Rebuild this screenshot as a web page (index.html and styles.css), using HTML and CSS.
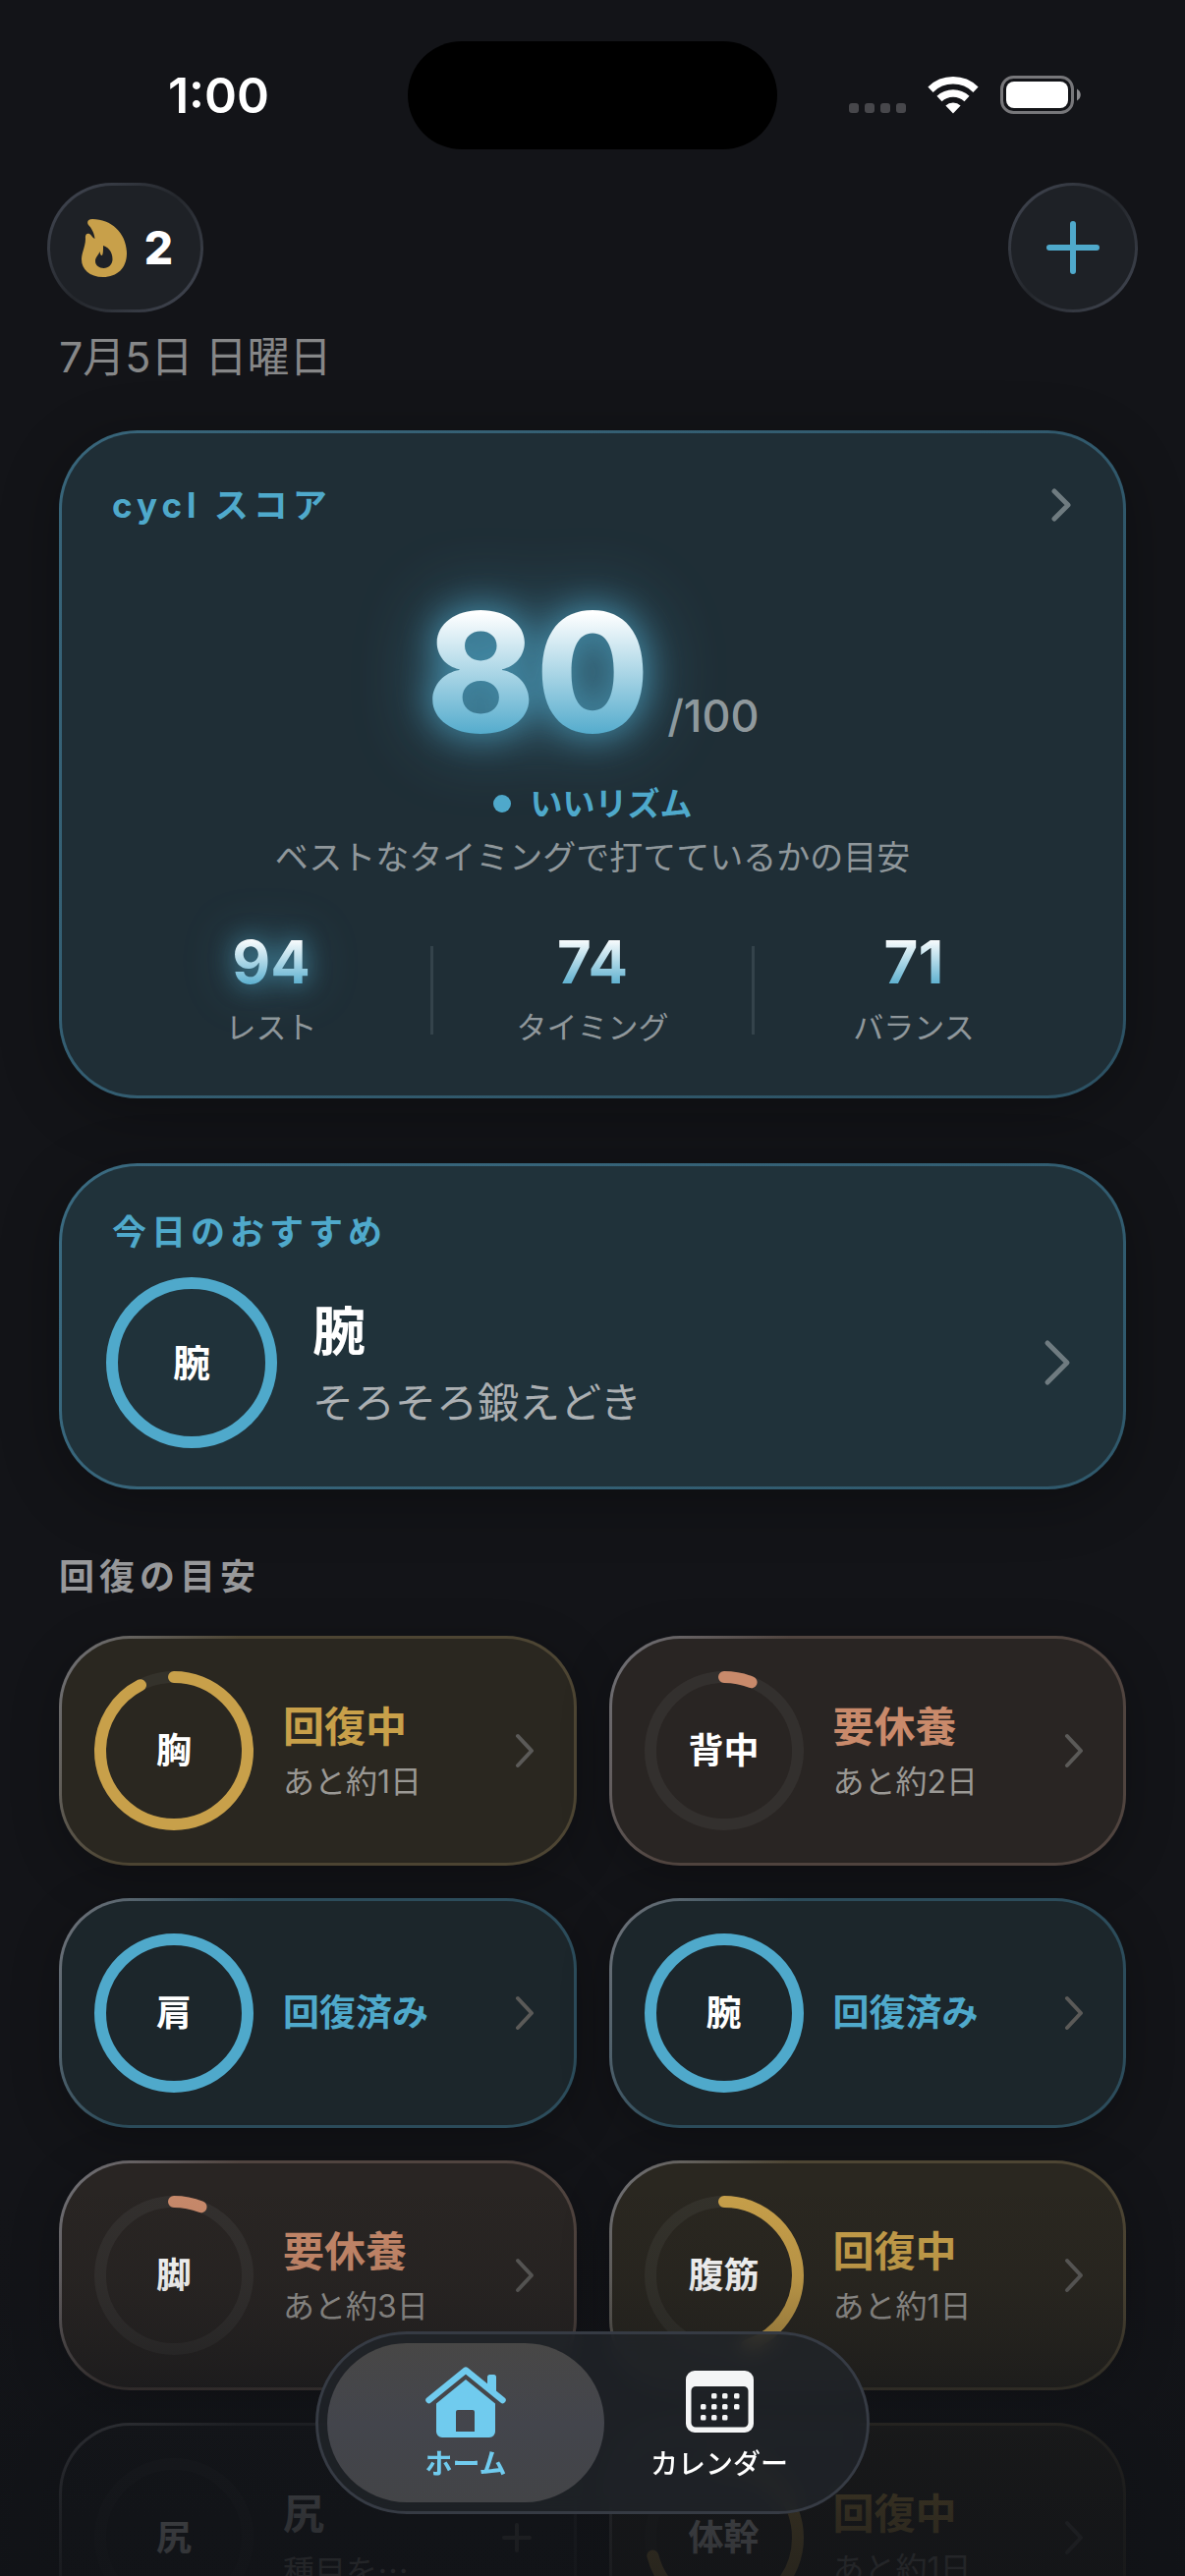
FILE: index.html
```html
<!DOCTYPE html>
<html lang="ja">
<head>
  <meta charset="UTF-8">
  <meta name="viewport" content="width=device-width, initial-scale=1.0">
  <title>cycl</title>
  <link rel="stylesheet" href="styles.css">
</head>
<body>
  <div class="screen">
    <div class="status-bar">
      <div class="status-time">1:00</div>
      <div class="island"></div>
      <div class="status-icons">
        <svg width="58" height="38" viewBox="0 0 58 38" fill="#47474b" aria-hidden="true">
          <rect x="0" y="27" width="10" height="10" rx="3"/>
          <rect x="16" y="27" width="10" height="10" rx="3"/>
          <rect x="32" y="27" width="10" height="10" rx="3"/>
          <rect x="48" y="27" width="10" height="10" rx="3"/>
        </svg>
        <svg width="52" height="38" viewBox="0 0 52 38" fill="none" stroke="#fff" stroke-width="7.5" aria-hidden="true">
          <path d="M3 13.2a33 33 0 0 1 46 0"/>
          <path d="M12 22.6a20.5 20.5 0 0 1 28 0"/>
          <path d="M26 37.5l-7.6-8a11 11 0 0 1 15.2 0z" fill="#fff" stroke="none"/>
        </svg>
        <svg width="82" height="40" viewBox="0 0 82 40" aria-hidden="true">
          <rect x="1.5" y="1.5" width="72" height="36" rx="12" fill="none" stroke="#77777a" stroke-width="3"/>
          <rect x="6" y="6" width="63" height="27" rx="8" fill="#fff"/>
          <path d="M78 13.5c5 2.500 5 9.500 0 12z" fill="#8a8a8d"/>
        </svg>
      </div>
    </div>

    <main class="content">
      <header class="toolbar">
        <button class="glass-button streak" type="button" aria-label="連続記録 2">
          <svg width="46" height="59" viewBox="0 0 46 59" aria-hidden="true">
            <path fill="#c8a04a" fill-rule="evenodd" d="M11 0C31 0 46 15 46 35 46 50 36 59 22 59 8 59 0 51 0 41 0 34 4 28 4 20 3.500 16 5 14 8 15 10 16 11 19 13.500 20 13 14 10 9 7 6 5 3 6.500 0 11 0zM22 27c0 5 0 8-1 10-2 0-2-2-2.500-4-1 4-4.500 5-4.500 10 0 4 4 7 8.500 7 5 0 9-4 9-9C31.500 34 28 29 22 27z"/>
          </svg>
          <span class="streak-count">2</span>
        </button>
        <button class="glass-button add" type="button" aria-label="追加">
          <svg width="54" height="54" viewBox="0 0 54 54" fill="none" stroke="#4fa9cb" stroke-width="6" stroke-linecap="round" aria-hidden="true">
            <path d="M27 3v48M3 27h48"/>
          </svg>
        </button>
      </header>

      <p class="date">7月5日 日曜日</p>

      <a class="card score-card" href="#score">
        <div class="card-head">
          <h2 class="card-label">cycl スコア</h2>
          <svg class="chevron" width="22" height="34" viewBox="0 0 22 34" aria-hidden="true"><path d="M3 3l14 14L3 31"/></svg>
        </div>
        <div class="score">
          <span class="score-value">80</span>
          <span class="score-max">/100</span>
        </div>
        <p class="rhythm"><span class="dot"></span>いいリズム</p>
        <p class="score-note">ベストなタイミングで打てているかの目安</p>
        <div class="stats">
          <div class="stat">
            <span class="stat-value glow">94</span>
            <span class="stat-label">レスト</span>
          </div>
          <div class="divider"></div>
          <div class="stat">
            <span class="stat-value">74</span>
            <span class="stat-label">タイミング</span>
          </div>
          <div class="divider"></div>
          <div class="stat">
            <span class="stat-value">71</span>
            <span class="stat-label">バランス</span>
          </div>
        </div>
      </a>

      <a class="card pick-card" href="#arms">
        <h2 class="card-label">今日のおすすめ</h2>
        <div class="pick-row">
          <div class="ring ring-large ready">
            <svg viewBox="0 0 162 162" aria-hidden="true"><circle class="bar" cx="81" cy="81" r="81"/></svg>
            <span class="ring-text">腕</span>
          </div>
          <div class="pick-text">
            <span class="pick-title">腕</span>
            <span class="pick-sub">そろそろ鍛えどき</span>
          </div>
          <svg class="chevron" width="30" height="48" viewBox="0 0 30 48" aria-hidden="true"><path d="M4 4l20 20L4 44"/></svg>
        </div>
      </a>

      <h2 class="section-title">回復の目安</h2>

      <div class="grid">
        <a class="muscle recovering" href="#chest">
          <div class="ring">
            <svg viewBox="0 0 150 150" aria-hidden="true">
              <circle class="track" cx="75" cy="75" r="75"/>
              <circle class="bar" cx="75" cy="75" r="75" pathLength="100" stroke-dasharray="92.5 100"/>
            </svg>
            <span class="ring-text">胸</span>
          </div>
          <div class="muscle-text">
            <span class="state">回復中</span>
            <span class="remain">あと約1日</span>
          </div>
          <svg class="chevron" width="20" height="34" viewBox="0 0 20 34" aria-hidden="true"><path d="M2 2l14 15L2 32"/></svg>
        </a>

        <a class="muscle rest" href="#back">
          <div class="ring">
            <svg viewBox="0 0 150 150" aria-hidden="true">
              <circle class="track" cx="75" cy="75" r="75"/>
              <circle class="bar" cx="75" cy="75" r="75" pathLength="100" stroke-dasharray="6 100"/>
            </svg>
            <span class="ring-text">背中</span>
          </div>
          <div class="muscle-text">
            <span class="state">要休養</span>
            <span class="remain">あと約2日</span>
          </div>
          <svg class="chevron" width="20" height="34" viewBox="0 0 20 34" aria-hidden="true"><path d="M2 2l14 15L2 32"/></svg>
        </a>

        <a class="muscle ready" href="#shoulders">
          <div class="ring">
            <svg viewBox="0 0 150 150" aria-hidden="true"><circle class="bar" cx="75" cy="75" r="75"/></svg>
            <span class="ring-text">肩</span>
          </div>
          <div class="muscle-text">
            <span class="state">回復済み</span>
          </div>
          <svg class="chevron" width="20" height="34" viewBox="0 0 20 34" aria-hidden="true"><path d="M2 2l14 15L2 32"/></svg>
        </a>

        <a class="muscle ready" href="#arms">
          <div class="ring">
            <svg viewBox="0 0 150 150" aria-hidden="true"><circle class="bar" cx="75" cy="75" r="75"/></svg>
            <span class="ring-text">腕</span>
          </div>
          <div class="muscle-text">
            <span class="state">回復済み</span>
          </div>
          <svg class="chevron" width="20" height="34" viewBox="0 0 20 34" aria-hidden="true"><path d="M2 2l14 15L2 32"/></svg>
        </a>

        <a class="muscle rest" href="#legs">
          <div class="ring">
            <svg viewBox="0 0 150 150" aria-hidden="true">
              <circle class="track" cx="75" cy="75" r="75"/>
              <circle class="bar" cx="75" cy="75" r="75" pathLength="100" stroke-dasharray="6 100"/>
            </svg>
            <span class="ring-text">脚</span>
          </div>
          <div class="muscle-text">
            <span class="state">要休養</span>
            <span class="remain">あと約3日</span>
          </div>
          <svg class="chevron" width="20" height="34" viewBox="0 0 20 34" aria-hidden="true"><path d="M2 2l14 15L2 32"/></svg>
        </a>

        <a class="muscle recovering" href="#abs">
          <div class="ring">
            <svg viewBox="0 0 150 150" aria-hidden="true">
              <circle class="track" cx="75" cy="75" r="75"/>
              <circle class="bar" cx="75" cy="75" r="75" pathLength="100" stroke-dasharray="45 100"/>
            </svg>
            <span class="ring-text">腹筋</span>
          </div>
          <div class="muscle-text">
            <span class="state">回復中</span>
            <span class="remain">あと約1日</span>
          </div>
          <svg class="chevron" width="20" height="34" viewBox="0 0 20 34" aria-hidden="true"><path d="M2 2l14 15L2 32"/></svg>
        </a>

        <a class="muscle empty" href="#glutes">
          <div class="ring">
            <svg viewBox="0 0 150 150" aria-hidden="true"><circle class="track" cx="75" cy="75" r="75"/></svg>
            <span class="ring-text">尻</span>
          </div>
          <div class="muscle-text">
            <span class="state">尻</span>
            <span class="remain">種目を…</span>
          </div>
          <svg class="chevron" width="34" height="30" viewBox="0 0 34 30" aria-hidden="true"><path d="M15 2v26M2 15h26"/></svg>
        </a>

        <a class="muscle recovering" href="#core">
          <div class="ring">
            <svg viewBox="0 0 150 150" aria-hidden="true">
              <circle class="track" cx="75" cy="75" r="75"/>
              <circle class="bar" cx="75" cy="75" r="75" pathLength="100" stroke-dasharray="71 100"/>
            </svg>
            <span class="ring-text">体幹</span>
          </div>
          <div class="muscle-text">
            <span class="state">回復中</span>
            <span class="remain">あと約1日</span>
          </div>
          <svg class="chevron" width="20" height="34" viewBox="0 0 20 34" aria-hidden="true"><path d="M2 2l14 15L2 32"/></svg>
        </a>
      </div>
    </main>

    <div class="fade"></div>

    <nav class="tab-bar">
      <a class="tab active" href="#home">
        <svg width="82" height="72" viewBox="0 0 82 72" aria-hidden="true">
          <path d="M3.500 34L41 3.500 78.500 34" fill="none" stroke="#70cbee" stroke-width="6.500" stroke-linecap="round" stroke-linejoin="round"/>
          <path d="M63 21V10.500a2.500 2.500 0 0 1 2.500-2.500h4a2.500 2.500 0 0 1 2.500 2.500V29z" fill="#70cbee"/>
          <path d="M41 13L71 37.500V66a6 6 0 0 1-6 6H17a6 6 0 0 1-6-6V37.500zM33 44a2 2 0 0 0-2 2v20h19V46a2 2 0 0 0-2-2z" fill="#70cbee" fill-rule="evenodd"/>
        </svg>
        <span>ホーム</span>
      </a>
      <a class="tab" href="#calendar">
        <svg width="68" height="72" viewBox="0 0 68 72" fill="#f4f5f6" aria-hidden="true">
          <path fill-rule="evenodd" d="M9 4h51a9 9 0 0 1 9 9v45a9 9 0 0 1-9 9H9a9 9 0 0 1-9-9V13a9 9 0 0 1 9-9zM10 20a4.500 4.500 0 0 0-4.500 4.500v32.500a4.500 4.500 0 0 0 4.500 4.500h49a4.500 4.500 0 0 0 4.500-4.500V24.500a4.500 4.500 0 0 0-4.500-4.500z"/>
          <rect x="26" y="27" width="5.500" height="5.500" rx="1.500"/>
          <rect x="37" y="27" width="5.500" height="5.500" rx="1.500"/>
          <rect x="49" y="27" width="5.500" height="5.500" rx="1.500"/>
          <rect x="15" y="38" width="5.500" height="5.500" rx="1.500"/>
          <rect x="26" y="38" width="5.500" height="5.500" rx="1.500"/>
          <rect x="37" y="38" width="5.500" height="5.500" rx="1.500"/>
          <rect x="49" y="38" width="5.500" height="5.500" rx="1.500"/>
          <rect x="15" y="49" width="5.500" height="5.500" rx="1.500"/>
          <rect x="26" y="49" width="5.500" height="5.500" rx="1.500"/>
          <rect x="37" y="49" width="5.500" height="5.500" rx="1.500"/>
        </svg>
        <span>カレンダー</span>
      </a>
    </nav>
  </div>
</body>
</html>
```
FILE: styles.css
```css
* {
  margin: 0;
  padding: 0;
  box-sizing: border-box;
}

body {
  font-family: Inter, 'Noto Sans CJK JP', sans-serif;
  background: #131418;
  color: white;
}

a {
  color: inherit;
  text-decoration: none;
}

svg {
  display: block;
  flex-shrink: 0;
  overflow: visible;
}

.screen {
  position: relative;
  height: 100vh;
  display: flex;
  flex-direction: column;
  overflow: hidden;
}

/* Status bar */

.status-bar {
  display: grid;
  grid-template-columns: 1fr 376px 1fr;
  align-items: center;
  padding: 42px 0 34px;
}

.status-time {
  padding-left: 30px;
  text-align: center;
  font-size: 50px;
  font-weight: 600;
  line-height: 60px;
}

.island {
  height: 110px;
  border-radius: 55px;
  background: #000;
}

.status-icons {
  display: flex;
  justify-content: center;
  align-items: center;
  gap: 22px;
  padding-right: 34px;
}

.content {
  flex: 1;
  min-height: 0;
  overflow-y: auto;
  scrollbar-width: none;
}

/* Toolbar */

.toolbar {
  display: flex;
  justify-content: space-between;
  padding: 0 48px;
}

.glass-button {
  display: flex;
  align-items: center;
  justify-content: center;
  height: 132px;
  border: 3px solid transparent;
  border-radius: 66px;
  background:
    linear-gradient(#1e2126, #1e2126) padding-box,
    linear-gradient(135deg, #454a56, #24272c 50%, #454a56) border-box;
  font-family: inherit;
  color: white;
  cursor: pointer;
}

.streak {
  width: 159px;
  gap: 18px;
  padding-left: 4px;
}

.streak-count {
  font-size: 46px;
  font-weight: 800;
  line-height: 54px;
}

.add {
  width: 132px;
}

.date {
  margin: 18px 60px 48px;
  font-size: 43px;
  line-height: 54px;
  color: #868788;
}

/* Cards */

.card {
  display: block;
  margin: 0 60px;
  border: 3px solid transparent;
  border-radius: 80px;
  box-shadow: 0 12px 60px rgba(0, 0, 0, 0.3);
}

.score-card {
  padding: 53px 51px 49px;
  background:
    linear-gradient(#1f2e36, #1f2e36) padding-box,
    linear-gradient(135deg, #38657a, #2c5163) border-box;
}

.card-head {
  display: flex;
  justify-content: space-between;
  align-items: center;
}

.card-label {
  font-size: 35px;
  font-weight: 700;
  line-height: 40px;
  letter-spacing: 5px;
  color: #4fa9cb;
}

.chevron {
  fill: none;
  stroke: #6f7b80;
  stroke-width: 5;
  stroke-linecap: round;
  stroke-linejoin: round;
}

.score {
  display: flex;
  justify-content: center;
  align-items: baseline;
  gap: 18px;
  margin-top: 66px;
}

.score-value {
  font-size: 168px;
  font-weight: 800;
  line-height: 168px;
  background: linear-gradient(#fff 14%, #4fa9cb 90%);
  background-clip: text;
  color: transparent;
  filter: drop-shadow(0 0 18px rgba(79, 169, 203, 0.85)) drop-shadow(0 0 36px rgba(79, 169, 203, 0.45));
}

.score-max {
  font-size: 45px;
  font-weight: 500;
  line-height: 54px;
  color: #90999d;
}

.rhythm {
  display: flex;
  justify-content: center;
  align-items: center;
  gap: 20px;
  margin-top: 30px;
  font-size: 33px;
  font-weight: 700;
  line-height: 40px;
  color: #4fa9cb;
}

.dot {
  width: 18px;
  height: 18px;
  border-radius: 50%;
  background: #4fa9cb;
}

.score-note {
  margin-top: 15px;
  text-align: center;
  font-size: 34px;
  line-height: 40px;
  color: #8f979b;
}

.stats {
  display: flex;
  align-items: center;
  margin-top: 56px;
}

.stat {
  flex: 1;
  display: flex;
  flex-direction: column;
  align-items: center;
  gap: 17px;
}

.stat-value {
  font-size: 60px;
  font-weight: 700;
  line-height: 60px;
  background: linear-gradient(#fff 10%, #4fa9cb 95%);
  background-clip: text;
  color: transparent;
}

.glow {
  filter: drop-shadow(0 0 12px rgba(79, 169, 203, 0.7)) drop-shadow(0 0 24px rgba(79, 169, 203, 0.35));
}

.stat-label {
  font-size: 31px;
  line-height: 40px;
  color: #8f979b;
}

.divider {
  width: 3px;
  height: 90px;
  background: #34434b;
}

.pick-card {
  margin-top: 66px;
  padding: 47px 51px 45px;
  background:
    linear-gradient(#20323a, #20323a) padding-box,
    linear-gradient(135deg, #3a6a80, #2f586b) border-box;
}

.pick-row {
  display: flex;
  align-items: center;
  gap: 42px;
  margin-top: 32px;
}

.pick-text {
  flex: 1;
  display: flex;
  flex-direction: column;
  gap: 12px;
  padding-top: 4px;
}

.pick-title {
  font-size: 54px;
  font-weight: 700;
  line-height: 66px;
}

.pick-sub {
  font-size: 42px;
  line-height: 54px;
  color: #abafb2;
}

/* Progress rings: the label and the circle share one grid cell */

.ring {
  display: grid;
  place-items: center;
  flex-shrink: 0;
  width: 150px;
  height: 150px;
}

.ring svg,
.ring-text {
  grid-area: 1 / 1;
}

.ring svg {
  width: 100%;
  height: 100%;
  transform: rotate(-90deg);
}

.ring circle {
  fill: none;
  stroke-width: 12;
  stroke-linecap: round;
}

.ring .track {
  stroke: rgba(255, 255, 255, 0.05);
}

.ring .bar {
  stroke: var(--tint);
}

.ring-text {
  font-size: 36px;
  font-weight: 700;
  line-height: 40px;
}

.ring-large {
  width: 162px;
  height: 162px;
}

.ring-large .ring-text {
  font-size: 38px;
}

/* Recovery grid */

.section-title {
  margin: 69px 60px 40px;
  font-size: 36px;
  font-weight: 600;
  line-height: 40px;
  letter-spacing: 5px;
  color: #97989a;
}

.grid {
  display: grid;
  grid-template-columns: 1fr 1fr;
  gap: 33px;
  padding: 0 60px 264px;
}

.muscle {
  display: flex;
  align-items: center;
  gap: 36px;
  padding: 39px;
  border: 3px solid transparent;
  border-radius: 72px;
  background:
    linear-gradient(var(--fill), var(--fill)) padding-box,
    linear-gradient(120deg, #73747a, var(--edge) 28%) border-box;
  box-shadow: 0 12px 48px rgba(0, 0, 0, 0.25);
}

.recovering {
  --tint: #c8a04a;
  --fill: #2a2720;
  --edge: #4d4533;
}

.rest {
  --tint: #c98a6b;
  --fill: #292523;
  --edge: #50443f;
}

.ready {
  --tint: #4fa9cb;
  --fill: #1c262b;
  --edge: #2c4c5b;
}

.empty {
  --tint: #c4c5c7;
  --fill: #17191d;
  --edge: #333539;
}

.muscle-text {
  flex: 1;
  min-width: 0;
  display: flex;
  flex-direction: column;
  gap: 8px;
}

.state {
  font-size: 42px;
  font-weight: 700;
  line-height: 56px;
  color: var(--tint);
}

.ready .state {
  font-size: 37px;
}

.remain {
  font-size: 32px;
  line-height: 40px;
  color: #9a9894;
}

.empty .remain {
  font-family: 'Noto Sans CJK JP', sans-serif;
}

.muscle .chevron {
  stroke: #5b5a58;
  stroke-width: 4;
}

/* Content fades out behind the tab bar */

.fade {
  position: absolute;
  left: 0;
  right: 0;
  bottom: 0;
  height: 400px;
  background: linear-gradient(
    rgba(17, 19, 23, 0) 0%,
    rgba(17, 19, 23, 0.1) 25%,
    rgba(17, 19, 23, 0.26) 38%,
    rgba(17, 19, 23, 0.5) 52%,
    rgba(17, 19, 23, 0.72) 64%,
    rgba(17, 19, 23, 0.83) 85%,
    rgba(17, 19, 23, 0.87) 100%
  );
  pointer-events: none;
}

.tab-bar {
  position: absolute;
  left: 50%;
  bottom: 63px;
  transform: translateX(-50%);
  display: flex;
  padding: 9px;
  border: 3px solid #363b44;
  border-radius: 93px;
  background: rgba(32, 36, 41, 0.8);
  backdrop-filter: blur(10px);
}

.tab {
  display: flex;
  flex-direction: column;
  align-items: center;
  gap: 7px;
  width: 282px;
  height: 162px;
  padding-top: 24px;
  border-radius: 81px;
  font-size: 28px;
  font-weight: 500;
  line-height: 40px;
}

.tab + .tab {
  margin-left: -24px;
}

.tab.active {
  background: linear-gradient(#484746, #43454c 50%, #434447);
  font-weight: 700;
  color: #70cbee;
}
```
